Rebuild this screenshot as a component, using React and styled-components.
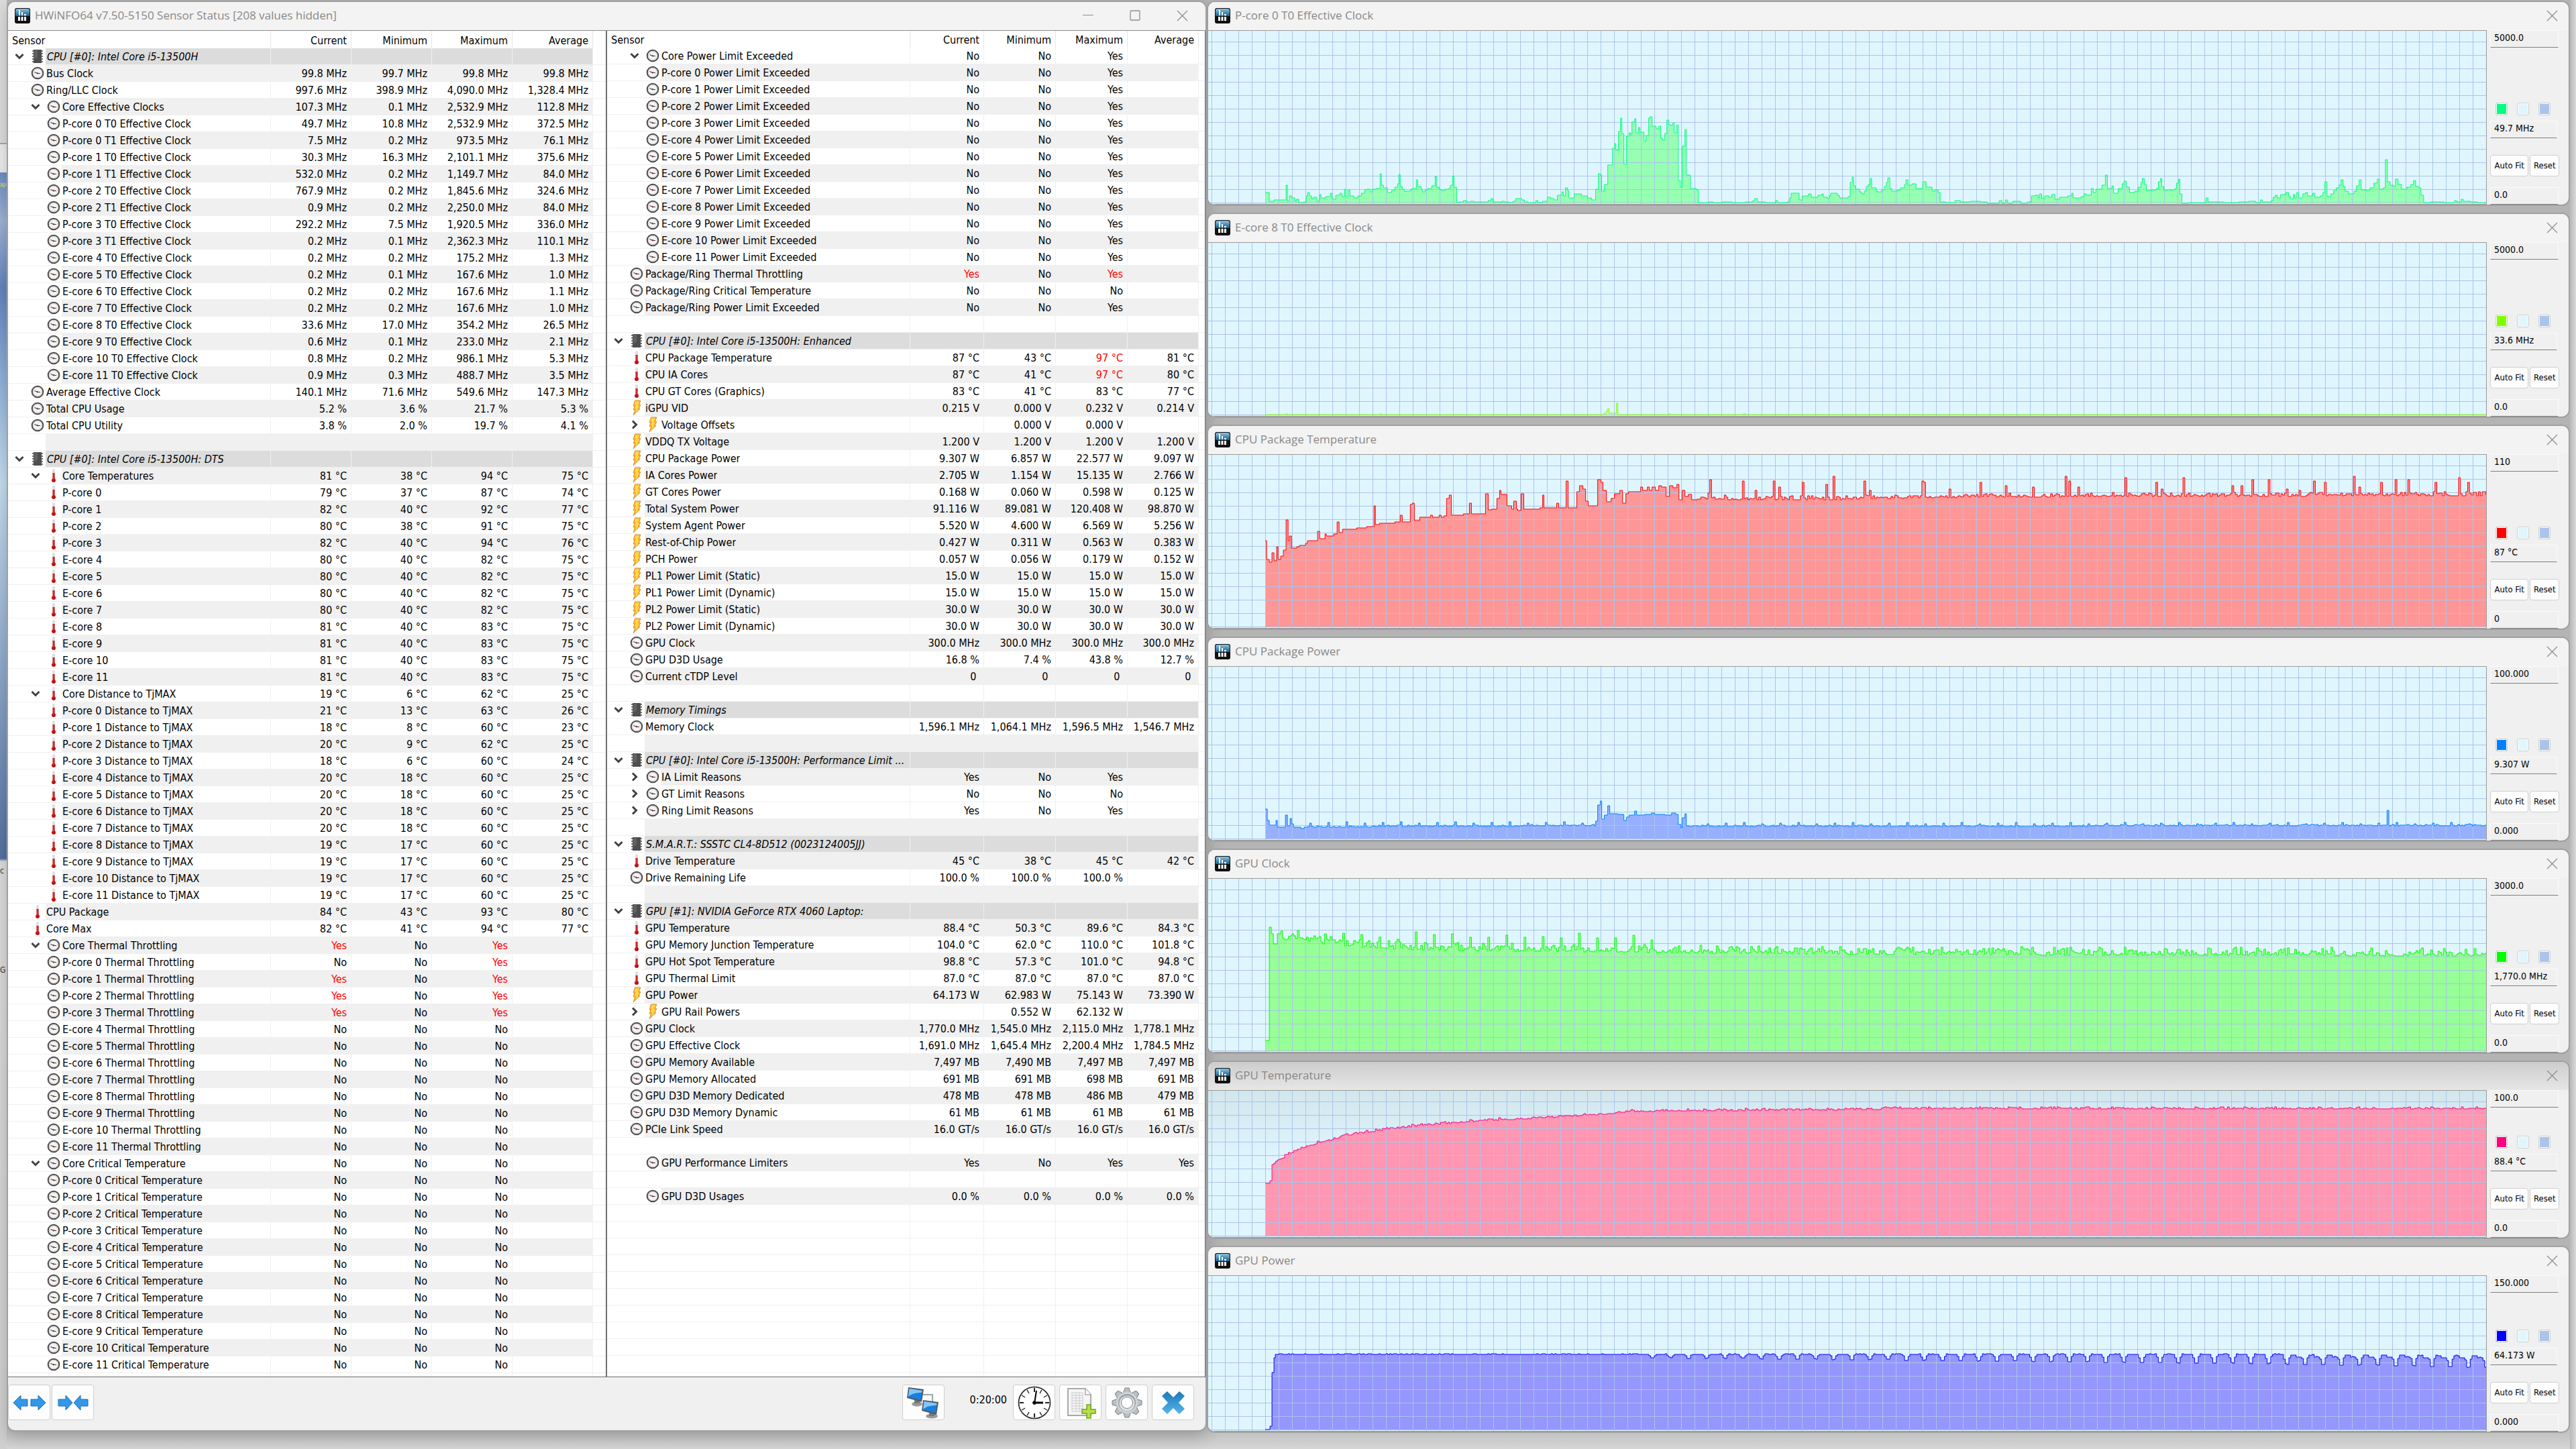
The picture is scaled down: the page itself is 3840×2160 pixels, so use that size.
import styled, { createGlobalStyle } from 'styled-components';

const GlobalStyle = createGlobalStyle`
    body {
        margin: 0;
        background: #c6c6c6;
    }

    * {
        box-sizing: border-box;
    }
`;

const UI_FONT = `'DejaVu Sans Condensed', 'Noto Sans', sans-serif`;
const TITLE_FONT = `'Open Sans', 'Noto Sans', sans-serif`;

const Desktop = styled.div`
    min-height: 100vh;
    display: grid;
    grid-template-columns: 10px 1789fr 2032fr 9px;
    align-items: start;
    background: linear-gradient(#b4b4b4 0 98%, #c4c4c4 99%, #d6d6d6 100%);
    font-family: ${UI_FONT};
    font-size: 16px;
    color: #000;
`;

const Wallpaper = styled.div`
    align-self: stretch;
    display: flex;
    flex-direction: column;
    background: linear-gradient(
        #dcdcdc 0 213px, #a8a8a8 213px 215px, #ececec 215px 257px, #6f8ec4 257px, #9fb4d4 330px,
        #6484bd 430px, #8fb0d8 560px, #c5deee 720px, #8fa9cc 1000px, #54719f 1280px, #dcdcdc 1284px, #cfcfcf 100%
    );
`;

const StrayText = styled.span`
    margin-top: ${({ $top }) => $top}px;
    height: 20px;
    line-height: 20px;
    white-space: nowrap;
    font-size: ${({ $size }) => $size}px;
    color: ${({ $color }) => $color};
`;

const RightEdge = styled.div`
    align-self: stretch;
    background: linear-gradient(to right, #b9b9b9, #d9d9d9);
`;

const Window = styled.section`
    display: flex;
    flex-direction: column;
    overflow: hidden;
    border: 2px solid #a0a0a0;
    border-radius: 12px;
    background: #f0f0f0;
`;

const SensorWindow = styled(Window)`
    margin-top: 1px;
    box-shadow: 0 8px 24px rgb(0 0 0 / 20%);
`;

const TitleBar = styled.header`
    height: 42px;
    padding: 0 ${({ $flush }) => ($flush ? 0 : 10)}px 2px 10px;
    display: flex;
    align-items: center;
    gap: 7px;
    background: ${({ $shaded }) => ($shaded ? 'linear-gradient(#cdcdcd, #e6e6e6)' : '#f3f3f3')};
`;

const Title = styled.h1`
    flex: 1;
    margin: 0;
    font-family: ${TITLE_FONT};
    font-weight: 400;
    font-size: 17px;
    line-height: 24px;
    color: #888;
    white-space: nowrap;
`;

const WindowButtons = styled.div`
    display: flex;
`;

const WindowButton = styled.button`
    width: ${({ $wide }) => ($wide ? 70 : 30)}px;
    height: 32px;
    padding: 0;
    display: flex;
    align-items: center;
    justify-content: center;
    border: 0;
    background: none;
    color: #8f8f8f;
`;

const Panes = styled.div`
    display: grid;
    grid-template-columns: 891fr 894fr;
    border-top: 1px solid #8a8a8a;
    border-bottom: 1px solid #6e6e6e;
    background: #fff;
`;

const Pane = styled.div`
    min-width: 0;
    height: 2006px;
    overflow: hidden;

    & + & {
        border-left: 2px solid #6e6e6e;
        border-right: 1px solid #6e6e6e;
    }
`;

const SensorTable = styled.table`
    width: 100%;
    table-layout: fixed;
    border-collapse: separate;
    border-spacing: 0;
    line-height: 20px;
    white-space: nowrap;
`;

const HeadCell = styled.th`
    height: ${({ $height }) => $height}px;
    padding: 3px 6px 0;
    border-right: 1px solid #e5e5e5;
    font-weight: 400;
    text-align: ${({ $first }) => ($first ? 'left' : 'right')};

    &:last-child {
        border-right: 0;
    }
`;

const ROW_FILL = { group: '#dcdcdc', striped: '#f0f0f0', plain: '#fff' };

const Cell = styled.td`
    height: 25px;
    padding: 2px 6px 0 0;
    border-right: 1px solid #f0f0f0;
    border-bottom: 1px solid #f0f0f0;
    background: ${({ $fill }) => ROW_FILL[$fill]};
    color: ${({ $alert }) => ($alert ? '#f00' : '#000')};
    text-align: right;
`;

const NameCell = styled(Cell)`
    padding: 0;
    text-align: left;
`;

const FillerCell = styled.td`
    border-bottom: 1px solid #f0f0f0;
`;

const Name = styled.div`
    display: flex;
    align-items: center;
    height: 24px;
`;

const Lead = styled.span`
    flex: none;
    height: 24px;
    width: ${({ $deep }) => ($deep ? 80 : 56)}px;
    padding-right: 2px;
    display: flex;
    align-items: center;
    justify-content: flex-end;
    gap: 10px;
    background: #fff;
`;

const Label = styled.span`
    padding: 2px 0 0 ${({ $group }) => ($group ? 2 : 1)}px;
    overflow: hidden;
    text-overflow: ellipsis;
    font-style: ${({ $group }) => ($group ? 'italic' : 'normal')};
`;

const Expander = styled.button`
    width: 14px;
    height: 14px;
    padding: 0;
    border: 0;
    background: none;
    display: flex;
`;

const ToolBar = styled.footer`
    height: 79px;
    padding: 11px 17px 0 0;
    display: flex;
    align-items: flex-start;
    gap: 2px;
`;

const Tools = styled.div`
    margin-left: auto;
    display: flex;
    align-items: center;
    gap: 6px;
`;

const ToolButton = styled.button`
    width: 63px;
    height: 53px;
    padding: 0;
    display: flex;
    align-items: center;
    justify-content: center;
    border: 1px solid #cfcfcf;
    border-radius: 4px;
    background: #fdfdfd;
`;

const Elapsed = styled.time`
    padding: 0 3px 8px 32px;
`;

const ChartStack = styled.main`
    margin-top: 1px;
    display: flex;
    flex-direction: column;
    gap: 10px;
`;

const ChartBody = styled.div`
    display: flex;
    height: ${({ $height }) => $height}px;
`;

const Plot = styled.svg`
    flex: 1;
    min-width: 0;
    height: 100%;
    border: 1px solid #9a9a9a;
    border-left: 0;
    background: ${({ $shaded }) => ($shaded ? 'linear-gradient(#d2e6ec, #e0f6fe 50%)' : '#e0f6fe')};
`;

const Controls = styled.div`
    width: 122px;
    padding: 0 14px 0 5px;
    display: flex;
    flex-direction: column;
`;

const Field = styled.input`
    width: ${({ $short }) => ($short ? 100 : 102)}px;
    height: 26px;
    padding: 0 5px 4px;
    border: 1px solid #fafafa;
    border-bottom-color: #808080;
    background: transparent;
    font-family: ${UI_FONT};
    font-size: 14px;
    color: #000;
`;

const Swatches = styled.div`
    margin-top: auto;
    margin-bottom: 8px;
    padding-left: 8px;
    display: flex;
    gap: 14px;
`;

const Swatch = styled.button`
    width: 18px;
    height: 19px;
    padding: 0;
    border: 1px solid #cfcfcf;
    border-radius: 3px;
    box-shadow: inset 0 0 0 1px #fdfdfd;
    background: ${({ $color }) => $color};
`;

const Actions = styled.div`
    margin: 25px 0 16px;
    display: flex;
    gap: 2px;
`;

const ActionButton = styled.button`
    width: ${({ $wide }) => ($wide ? 58 : 44)}px;
    height: 32px;
    padding: 0 0 2px;
    border: 1px solid #cfcfcf;
    border-radius: 4px;
    background: #fdfdfd;
    font-family: ${UI_FONT};
    font-size: 13px;
    color: #000;
    white-space: nowrap;
`;

/* ---------- icons ---------- */

const AppIcon = () => (
    <svg width="23" height="23" viewBox="0 0 23 23">
        <defs>
            <linearGradient id="appTop" x1="0" y1="0" x2="0" y2="1">
                <stop offset="0" stopColor="#8fc1dc" />
                <stop offset="1" stopColor="#0f5f92" />
            </linearGradient>
        </defs>
        <rect width="23" height="23" rx="3" fill="#111" />
        <path d="M1 4a3 3 0 0 1 3-3h15a3 3 0 0 1 3 3v8H1z" fill="url(#appTop)" />
        <path d="M6 3h2v8H6zM10 6h2v5h-2zM14 9h3v2h-3z" fill="#fff" />
        <path d="M5 13h3v6H5zM9.500 13h3v6h-3zM14 13h3v6h-3z" fill="#fff" />
    </svg>
);

const CloseGlyph = () => (
    <svg width="17" height="17" viewBox="0 0 17 17" fill="none" stroke="currentColor" strokeWidth="1.300">
        <path d="M1 1l15 15M16 1L1 16" />
    </svg>
);

const MinimizeGlyph = () => (
    <svg width="16" height="16" viewBox="0 0 16 16" stroke="currentColor">
        <path d="M0 7.500h16" />
    </svg>
);

const MaximizeGlyph = () => (
    <svg width="16" height="16" viewBox="0 0 16 16" fill="none" stroke="currentColor" strokeWidth="1.300">
        <rect x="1" y="1" width="14" height="14" rx="1" />
    </svg>
);

const ClockIcon = () => (
    <svg width="20" height="20" viewBox="0 0 20 20">
        <circle cx="10" cy="10" r="8.300" fill="#f4f4f4" stroke="#4c4c4c" strokeWidth="2" />
        <circle cx="10" cy="10" r="6.500" fill="none" stroke="#cfcfcf" />
        <path d="M5.500 8.500L10 10.500h4" fill="none" stroke="#4a3a38" strokeWidth="1.200" />
        <circle cx="10" cy="10.300" r="1.200" fill="#8a3a30" />
    </svg>
);

const TempIcon = () => (
    <svg width="20" height="22" viewBox="0 0 20 22">
        <rect x="8" y="1" width="4" height="16" rx="2" fill="#dedede" />
        <rect x="8.500" y="7" width="3" height="10" fill="#c81414" />
        <circle cx="10" cy="18" r="3" fill="#c01010" />
        <path d="M9 8v9" stroke="#f07070" strokeWidth=".8" />
    </svg>
);

const BoltIcon = () => (
    <svg width="20" height="24" viewBox="0 0 20 24">
        <path d="M7.500 1H16l-2.500 6.500H16L13 13.500h2L5 23l2.500-8H5l2-6H5z" fill="#f9b01c" stroke="#dc8f3c" strokeWidth=".9" />
        <path d="M8.500 2.200h5.500L11.500 8.500h2.500L11 14.500H12.500L8 19l1.500-5.500H7l2-6H7.200z" fill="#ffd84d" />
    </svg>
);

const ChipIcon = () => (
    <svg width="20" height="22" viewBox="0 0 20 22">
        <path d="M3.500 2v19M16.500 2v19" stroke="#777" strokeWidth="3" strokeDasharray="2 2" />
        <rect x="4" y="1" width="12" height="20" fill="#4e4e50" />
        <path d="M5 2h5v10l-5 4z" fill="#626264" />
    </svg>
);

const Chevron = ({ open }) => (
    <svg width="14" height="14" viewBox="0 0 14 14" fill="none" stroke="#404040" strokeWidth="3">
        <path d={open ? 'M1.500 4l5.500 5.500L12.500 4' : 'M4 1.500L9.500 7 4 12.500'} />
    </svg>
);

const ICONS = { chip: ChipIcon, clock: ClockIcon, temp: TempIcon, bolt: BoltIcon };

const ExpandIcon = () => (
    <svg width="50" height="30" viewBox="0 0 50 30" fill="#3498e8" stroke="#1f6fb2">
        <path d="M1 15L12 4v6h10v10H12v6zM49 15L38 4v6H27v10h11v6z" />
    </svg>
);

const CollapseIcon = () => (
    <svg width="50" height="30" viewBox="0 0 50 30" fill="#3498e8" stroke="#1f6fb2">
        <path d="M24 15L14 4v6H3v10h11v6zM26 15L36 4v6h11v10H36v6z" />
    </svg>
);

const NetworkIcon = () => (
    <svg width="50" height="48" viewBox="0 0 50 48">
        <path d="M25 12h14v12" fill="none" stroke="#7b8a8a" strokeWidth="1.500" />
        <ellipse cx="16" cy="26" rx="8" ry="3.500" fill="#9a9a9a" />
        <path d="M12 19h8v6h-8z" fill="#777" />
        <path d="M3 1l23 3-3 19-22-6z" fill="#555d66" />
        <path d="M4.500 3l19 3-2 14-19-5z" fill="#1680e0" />
        <path d="M4.500 3l19 3-.6 3C14 9 7 11 3 15z" fill="#86c6f7" />
        <ellipse cx="38" cy="44" rx="9" ry="3.500" fill="#9a9a9a" />
        <path d="M34 38h8v6h-8z" fill="#777" />
        <path d="M25 20l23 3-3 19-22-6z" fill="#555d66" />
        <path d="M26.500 22l19 3-2 14-19-5z" fill="#1680e0" />
        <path d="M26.500 22l19 3-.6 3c-8.900 0-15.900 2-19.900 6z" fill="#86c6f7" />
    </svg>
);

const BigClockIcon = () => (
    <svg width="50" height="50" viewBox="0 0 50 50" fill="none" stroke="#222">
        <circle cx="25" cy="25" r="23.500" fill="#fff" strokeWidth="1.600" />
        {[...Array(12)].map((_, i) => (
            <path key={i} d="M25 3v6" strokeWidth={i % 3 ? 1.3 : 2} transform={`rotate(${i * 30} 25 25)`} />
        ))}
        <path d="M25 26l3-19" stroke="#000" strokeWidth="2" />
        <path d="M25 25h13" stroke="#000" strokeWidth="3" />
        <circle cx="25" cy="25" r="2.500" fill="#000" />
    </svg>
);

const ReportIcon = () => (
    <svg width="46" height="48" viewBox="0 0 46 48">
        <path d="M4 3h26l8 9v31H4z" fill="#f5f5f5" stroke="#a9a9a9" strokeWidth="2" />
        <path d="M30 3v9h8" fill="#fff" stroke="#a9a9a9" strokeWidth="1.500" />
        <path d="M10 9h16v28H10zM10 13h16M10 17h16M10 21h16M10 25h16M10 29h16M10 33h16M16 9v28M21 9v28" fill="none" stroke="#cccccc" />
        <path d="M32 27h6v7h7v6h-7v7h-6v-7h-7v-6h7z" fill="#b5e04a" stroke="#6fa51e" strokeWidth="1.500" />
    </svg>
);

const GearIcon = () => (
    <svg width="48" height="48" viewBox="0 0 48 48">
        <g fill="#b9bfc2" stroke="#7d8488">
            {[...Array(8)].map((_, i) => (
                <path key={i} d="M18 11l3-9h6l3 9z" transform={`rotate(${i * 45} 24 24)`} />
            ))}
        </g>
        <circle cx="24" cy="24" r="16" fill="#ced3d5" />
        <circle cx="24" cy="24" r="13" fill="#979da1" />
        <circle cx="24" cy="25" r="11.500" fill="#dde1e2" />
        <circle cx="24" cy="24" r="8.500" fill="#fff" stroke="#7d8488" />
    </svg>
);

const QuitIcon = () => (
    <svg width="38" height="38" viewBox="0 0 38 38">
        <defs>
            <linearGradient id="quit" x1="0" y1="0" x2="0" y2="1">
                <stop offset="0" stopColor="#1c79b8" />
                <stop offset="1" stopColor="#57b5ea" />
            </linearGradient>
        </defs>
        <path d="M10 2l9 9 9-9 8 7-9 10 9 9-8 8-9-9-9 9-8-8 9-9-9-10z" fill="url(#quit)" />
    </svg>
);

/* ---------- sensor lists ---------- */

// icon | level | label | current | minimum | maximum | average
// level: 0 section, 1 value, 2 nested value, + / - an expanded / collapsed branch
const parseRows = (text) =>
    text.trim().split('\n').map((line) => {
        const [icon, level, label, ...values] = line.split('|').map((part) => part.trim());
        return { icon, level, label, values };
    });

const same = (icon, names, suffix, values) =>
    names.map((name) => `${icon}|2|${name} ${suffix}|${values}`).join('\n');

const cores = (from, to) => {
    const list = [];
    for (let i = from; i <= to; i++) list.push(`${i < 4 ? 'P' : 'E'}-core ${i}`);
    return list;
};

const LEFT_ROWS = parseRows(`
chip|0|CPU [#0]: Intel Core i5-13500H
clock|1|Bus Clock|99.8 MHz|99.7 MHz|99.8 MHz|99.8 MHz
clock|1|Ring/LLC Clock|997.6 MHz|398.9 MHz|4,090.0 MHz|1,328.4 MHz
clock|+|Core Effective Clocks|107.3 MHz|0.1 MHz|2,532.9 MHz|112.8 MHz
clock|2|P-core 0 T0 Effective Clock|49.7 MHz|10.8 MHz|2,532.9 MHz|372.5 MHz
clock|2|P-core 0 T1 Effective Clock|7.5 MHz|0.2 MHz|973.5 MHz|76.1 MHz
clock|2|P-core 1 T0 Effective Clock|30.3 MHz|16.3 MHz|2,101.1 MHz|375.6 MHz
clock|2|P-core 1 T1 Effective Clock|532.0 MHz|0.2 MHz|1,149.7 MHz|84.0 MHz
clock|2|P-core 2 T0 Effective Clock|767.9 MHz|0.2 MHz|1,845.6 MHz|324.6 MHz
clock|2|P-core 2 T1 Effective Clock|0.9 MHz|0.2 MHz|2,250.0 MHz|84.0 MHz
clock|2|P-core 3 T0 Effective Clock|292.2 MHz|7.5 MHz|1,920.5 MHz|336.0 MHz
clock|2|P-core 3 T1 Effective Clock|0.2 MHz|0.1 MHz|2,362.3 MHz|110.1 MHz
clock|2|E-core 4 T0 Effective Clock|0.2 MHz|0.2 MHz|175.2 MHz|1.3 MHz
clock|2|E-core 5 T0 Effective Clock|0.2 MHz|0.1 MHz|167.6 MHz|1.0 MHz
clock|2|E-core 6 T0 Effective Clock|0.2 MHz|0.2 MHz|167.6 MHz|1.1 MHz
clock|2|E-core 7 T0 Effective Clock|0.2 MHz|0.2 MHz|167.6 MHz|1.0 MHz
clock|2|E-core 8 T0 Effective Clock|33.6 MHz|17.0 MHz|354.2 MHz|26.5 MHz
clock|2|E-core 9 T0 Effective Clock|0.6 MHz|0.1 MHz|233.0 MHz|2.1 MHz
clock|2|E-core 10 T0 Effective Clock|0.8 MHz|0.2 MHz|986.1 MHz|5.3 MHz
clock|2|E-core 11 T0 Effective Clock|0.9 MHz|0.3 MHz|488.7 MHz|3.5 MHz
clock|1|Average Effective Clock|140.1 MHz|71.6 MHz|549.6 MHz|147.3 MHz
clock|1|Total CPU Usage|5.2 %|3.6 %|21.7 %|5.3 %
clock|1|Total CPU Utility|3.8 %|2.0 %|19.7 %|4.1 %
|blank
chip|0|CPU [#0]: Intel Core i5-13500H: DTS
temp|+|Core Temperatures|81 °C|38 °C|94 °C|75 °C
temp|2|P-core 0|79 °C|37 °C|87 °C|74 °C
temp|2|P-core 1|82 °C|40 °C|92 °C|77 °C
temp|2|P-core 2|80 °C|38 °C|91 °C|75 °C
temp|2|P-core 3|82 °C|40 °C|94 °C|76 °C
${same('temp', cores(4, 7), '', '80 °C|40 °C|82 °C|75 °C')}
${same('temp', cores(8, 11), '', '81 °C|40 °C|83 °C|75 °C')}
temp|+|Core Distance to TjMAX|19 °C|6 °C|62 °C|25 °C
temp|2|P-core 0 Distance to TjMAX|21 °C|13 °C|63 °C|26 °C
temp|2|P-core 1 Distance to TjMAX|18 °C|8 °C|60 °C|23 °C
temp|2|P-core 2 Distance to TjMAX|20 °C|9 °C|62 °C|25 °C
temp|2|P-core 3 Distance to TjMAX|18 °C|6 °C|60 °C|24 °C
${same('temp', cores(4, 7), 'Distance to TjMAX', '20 °C|18 °C|60 °C|25 °C')}
${same('temp', cores(8, 11), 'Distance to TjMAX', '19 °C|17 °C|60 °C|25 °C')}
temp|1|CPU Package|84 °C|43 °C|93 °C|80 °C
temp|1|Core Max|82 °C|41 °C|94 °C|77 °C
clock|+|Core Thermal Throttling|!Yes|No|!Yes|
clock|2|P-core 0 Thermal Throttling|No|No|!Yes|
${same('clock', cores(1, 3), 'Thermal Throttling', '!Yes|No|!Yes|')}
${same('clock', cores(4, 11), 'Thermal Throttling', 'No|No|No|')}
clock|+|Core Critical Temperature|No|No|No|
${same('clock', cores(0, 11), 'Critical Temperature', 'No|No|No|')}
`);

const RIGHT_ROWS = parseRows(`
clock|+|Core Power Limit Exceeded|No|No|Yes|
${same('clock', cores(0, 11), 'Power Limit Exceeded', 'No|No|Yes|')}
clock|1|Package/Ring Thermal Throttling|!Yes|No|!Yes|
clock|1|Package/Ring Critical Temperature|No|No|No|
clock|1|Package/Ring Power Limit Exceeded|No|No|Yes|
|blank
chip|0|CPU [#0]: Intel Core i5-13500H: Enhanced
temp|1|CPU Package Temperature|87 °C|43 °C|!97 °C|81 °C
temp|1|CPU IA Cores|87 °C|41 °C|!97 °C|80 °C
temp|1|CPU GT Cores (Graphics)|83 °C|41 °C|83 °C|77 °C
bolt|1|iGPU VID|0.215 V|0.000 V|0.232 V|0.214 V
bolt|-|Voltage Offsets||0.000 V|0.000 V|
bolt|1|VDDQ TX Voltage|1.200 V|1.200 V|1.200 V|1.200 V
bolt|1|CPU Package Power|9.307 W|6.857 W|22.577 W|9.097 W
bolt|1|IA Cores Power|2.705 W|1.154 W|15.135 W|2.766 W
bolt|1|GT Cores Power|0.168 W|0.060 W|0.598 W|0.125 W
bolt|1|Total System Power|91.116 W|89.081 W|120.408 W|98.870 W
bolt|1|System Agent Power|5.520 W|4.600 W|6.569 W|5.256 W
bolt|1|Rest-of-Chip Power|0.427 W|0.311 W|0.563 W|0.383 W
bolt|1|PCH Power|0.057 W|0.056 W|0.179 W|0.152 W
bolt|1|PL1 Power Limit (Static)|15.0 W|15.0 W|15.0 W|15.0 W
bolt|1|PL1 Power Limit (Dynamic)|15.0 W|15.0 W|15.0 W|15.0 W
bolt|1|PL2 Power Limit (Static)|30.0 W|30.0 W|30.0 W|30.0 W
bolt|1|PL2 Power Limit (Dynamic)|30.0 W|30.0 W|30.0 W|30.0 W
clock|1|GPU Clock|300.0 MHz|300.0 MHz|300.0 MHz|300.0 MHz
clock|1|GPU D3D Usage|16.8 %|7.4 %|43.8 %|12.7 %
clock|1|Current cTDP Level|0_|0_|0_|0_
|blank
chip|0|Memory Timings
clock|1|Memory Clock|1,596.1 MHz|1,064.1 MHz|1,596.5 MHz|1,546.7 MHz
|blank
chip|0|CPU [#0]: Intel Core i5-13500H: Performance Limit ...
clock|-|IA Limit Reasons|Yes|No|Yes|
clock|-|GT Limit Reasons|No|No|No|
clock|-|Ring Limit Reasons|Yes|No|Yes|
|blank
chip|0|S.M.A.R.T.: SSSTC CL4-8D512 (0023124005JJ)
temp|1|Drive Temperature|45 °C|38 °C|45 °C|42 °C
clock|1|Drive Remaining Life|100.0 %|100.0 %|100.0 %|
|blank
chip|0|GPU [#1]: NVIDIA GeForce RTX 4060 Laptop:
temp|1|GPU Temperature|88.4 °C|50.3 °C|89.6 °C|84.3 °C
temp|1|GPU Memory Junction Temperature|104.0 °C|62.0 °C|110.0 °C|101.8 °C
temp|1|GPU Hot Spot Temperature|98.8 °C|57.3 °C|101.0 °C|94.8 °C
temp|1|GPU Thermal Limit|87.0 °C|87.0 °C|87.0 °C|87.0 °C
bolt|1|GPU Power|64.173 W|62.983 W|75.143 W|73.390 W
bolt|-|GPU Rail Powers||0.552 W|62.132 W|
clock|1|GPU Clock|1,770.0 MHz|1,545.0 MHz|2,115.0 MHz|1,778.1 MHz
clock|1|GPU Effective Clock|1,691.0 MHz|1,645.4 MHz|2,200.4 MHz|1,784.5 MHz
clock|1|GPU Memory Available|7,497 MB|7,490 MB|7,497 MB|7,497 MB
clock|1|GPU Memory Allocated|691 MB|691 MB|698 MB|691 MB
clock|1|GPU D3D Memory Dedicated|478 MB|478 MB|486 MB|479 MB
clock|1|GPU D3D Memory Dynamic|61 MB|61 MB|61 MB|61 MB
clock|1|PCIe Link Speed|16.0 GT/s|16.0 GT/s|16.0 GT/s|16.0 GT/s
|blank
clock|2|GPU Performance Limiters|Yes|No|Yes|Yes
|blank
clock|2|GPU D3D Usages|0.0 %|0.0 %|0.0 %|0.0 %
`);

const COLUMNS = ['Current', 'Minimum', 'Maximum', 'Average'];

const SensorRow = ({ row, striped }) => {
    const { icon, level, label, values } = row;
    const group = level === '0';
    const branch = level === '+' || level === '-';
    const fill = group ? 'group' : striped ? 'striped' : 'plain';
    const Icon = ICONS[icon];

    return (
        <tr>
            <NameCell $fill={fill}>
                <Name>
                    {level !== 'empty' && (
                        <Lead $deep={branch || level === '2'}>
                            {(group || branch) && (
                                <Expander aria-label={`Toggle ${label}`}>
                                    <Chevron open={level !== '-'} />
                                </Expander>
                            )}
                            {Icon && <Icon />}
                        </Lead>
                    )}
                    <Label $group={group}>{label}</Label>
                </Name>
            </NameCell>
            {COLUMNS.map((name, i) => {
                const value = (values && values[i]) || '';
                return (
                    <Cell key={name} $fill={fill} $alert={value[0] === '!'}>
                        {value.replace('!', '').replace('_', '\u00a0')}
                    </Cell>
                );
            })}
            <FillerCell />
        </tr>
    );
};

const SensorPane = ({ rows, widths, headHeight, shiftAt = Infinity }) => {
    const total = 81;
    const all = [...rows, ...Array(total - rows.length).fill({ level: 'empty' })];

    return (
        <Pane>
            <SensorTable>
                <colgroup>
                    <col />
                    {widths.map((width, i) => <col key={i} width={width} />)}
                </colgroup>
                <thead>
                    <tr>
                        <HeadCell $first $height={headHeight}>Sensor</HeadCell>
                        {COLUMNS.map((name) => <HeadCell key={name} $height={headHeight}>{name}</HeadCell>)}
                        <HeadCell />
                    </tr>
                </thead>
                <tbody>
                    {all.map((row, i) => (
                        <SensorRow
                            key={i}
                            row={row}
                            // collapsed children count towards the striping
                            striped={row.level !== 'empty' && i % 2 === (i >= shiftAt ? 0 : 1)}
                        />
                    ))}
                </tbody>
            </SensorTable>
        </Pane>
    );
};

/* ---------- charts ---------- */

const SPAN = 1903;
const START = 85;
const STEP = 2.7;

const noiseAt = (i) => {
    const n = Math.sin(i * 12.9898 + 4.1) * 43758.5453;
    return n - Math.floor(n);
};

// "x:h x:h ..." -> [[x, h], ...]
const parsePoints = (text) => text.trim().split(/\s+/).map((pair) => pair.split(':').map(Number));

const levelAt = (points, x) => {
    let k = 0;
    while (k < points.length - 2 && points[k + 1][0] <= x) k++;
    const [x0, h0] = points[k];
    const [x1, h1] = points[k + 1];
    return h0 + ((h1 - h0) * Math.min(1, (x - x0) / (x1 - x0)));
};

// a slow curve with noise, spikes on top of it
const sampled = (from, points, noise, spikes = [], shape = () => 0) => {
    const out = [];
    for (let i = 0, x = from; x < SPAN; i++, x += STEP) {
        const spike = spikes.find(([at]) => x >= at && x < at + STEP);
        const wobble = Math.round((noiseAt(i) ** 2) * noise);
        out.push([x, spike ? spike[1] : Math.round(levelAt(points, x)) + wobble + shape(x, i)]);
    }
    return out;
};

const every = (from, to, gap, height) => {
    const list = [];
    for (let x = from, i = 0; x < to; x += gap, i++) list.push([x, height(i)]);
    return list;
};

const P_CORE = parsePoints(`
85:16 91:3 98:5 110:5 116:27 118:3 121:11 124:8 129:3 131:6 135:1 142:2 146:11 148:16 151:11 154:7 157:9 162:3 166:13
168:8 175:10 182:15 184:8 186:6 190:12 196:15 199:10 203:21 205:10 208:20 211:11 217:8 223:11 228:15 233:20 236:21
241:17 244:21 250:22 256:44 258:27 261:23 267:16 273:19 278:24 282:29 284:43 286:25 289:21 292:18 300:19 303:22 310:35
312:25 317:21 319:17 323:20 327:22 333:26 338:40 340:24 344:21 347:19 353:21 359:23 361:27 364:41 366:24 370:1 374:2
380:4 385:2 391:3 396:2 417:4 421:7 424:2 435:1 437:3 441:2 448:1 454:3 458:7 467:5 471:2 476:1 488:4 491:1 498:3 505:9
510:7 515:5 520:12 527:17 529:11 532:23 535:19 537:8 545:14 556:11 565:8 571:5 577:21 581:44 584:42 586:18 590:28 595:57
602:82 605:89 607:79 611:107 614:127 616:104 619:58 623:100 627:105 629:102 631:121 635:126 637:105 641:113 643:106
649:93 652:101 656:127 658:129 661:115 667:111 671:115 674:97 677:94 680:104 683:124 686:117 689:116 692:120 694:105
698:117 700:34 703:24 706:85 710:110 712:42 718:22 727:20 730:1 745:2 752:1 766:2 780:1 800:2 811:4 814:7 818:2 830:1
845:4 848:1 862:2 866:8 868:15 880:5 885:11 894:14 898:9 908:12 914:14 916:9 922:7 925:11 927:15 937:12 940:8 953:10
956:31 959:39 961:26 964:21 970:17 973:14 977:18 980:25 983:28 986:37 988:23 995:18 997:17 1003:20 1007:25 1010:31
1012:38 1015:22 1018:18 1026:20 1031:23 1037:28 1039:35 1042:27 1048:29 1054:22 1064:32 1069:24 1078:18 1082:20 1087:16
1090:2 1098:1 1112:4 1120:2 1135:3 1150:2 1160:0 1178:4 1182:0 1187:5 1190:0 1198:3 1210:0 1220:2 1226:11 1231:12
1236:8 1238:14 1241:7 1246:11 1252:9 1256:13 1261:6 1268:9 1280:11 1286:15 1288:8 1300:10 1304:14 1308:12 1315:22
1318:16 1322:21 1331:27 1336:42 1339:22 1346:26 1348:15 1355:22 1361:29 1364:33 1367:24 1372:16 1380:18 1385:24 1389:31
1391:37 1394:28 1397:19 1405:20 1412:22 1415:32 1418:37 1420:25 1423:19 1428:20 1440:22 1442:30 1445:36 1447:14 1450:0
1460:1 1486:8 1489:2 1512:1 1535:2 1549:3 1560:1 1567:5 1570:2 1583:4 1586:9 1589:12 1592:8 1597:13 1605:16 1609:10
1612:7 1616:13 1618:8 1621:16 1624:8 1630:14 1634:16 1637:11 1645:15 1648:9 1656:11 1660:16 1663:32 1666:10 1672:14
1676:19 1680:23 1684:27 1687:35 1690:25 1693:18 1698:14 1706:18 1710:26 1714:35 1717:20 1724:19 1730:23 1736:30 1741:36
1744:21 1750:23 1753:65 1756:32 1760:27 1765:25 1768:36 1772:28 1777:21 1785:24 1791:28 1795:34 1798:25 1803:23 1806:12
1810:1 1820:2 1840:1 1856:4 1859:2 1866:6 1869:3 1880:2 1890:1
`);

const E_CORE = parsePoints('85:1 116:2 118:1 256:2 258:1 589:3 593:6 595:10 597:3 608:18 610:1 686:2 688:1 797:2 800:1');

const CPU_TEMP = [
    ...parsePoints(`
    85:129 87:101 91:97 95:111 98:99 102:120 104:101 108:106 112:115 116:160 119:129 121:136 124:118 132:120 136:122
    145:125 148:129 163:143 166:132 174:139 176:136 187:139 192:157 195:141 200:146 208:146 221:148 236:150 247:181
    249:153 255:155 278:157 286:167 289:157 301:183 304:185 307:159 315:164 331:167 334:164 344:167 347:164 351:166
    355:192 359:197 362:167 380:169 389:185 392:169 413:199 417:175 422:176 430:192 434:204 436:198 445:181 452:176
    455:188 459:176 461:174 466:199 470:176 494:178 498:197 500:178 519:185 522:178 533:218 536:178 549:202 553:211
    558:206 562:188 566:181 580:220 585:216 588:204 593:187 600:192 605:199 613:204 617:185 622:199 626:202 644:209
    647:204 654:209 657:204 661:209 666:204 671:211 675:209 682:195 687:211 692:208 698:213 701:190 706:204 710:195
    715:198 720:190`),
    ...sampled(728, [[728, 190], [942, 190], [1000, 192], [1165, 194], [1400, 195], [SPAN, 196]], 6, [
        [742, 200], [746, 220], [766, 197], [795, 218], [812, 204], [839, 218], [847, 209], [884, 216], [919, 213],
        [928, 225], [974, 218], [983, 204], [1061, 218], [1064, 216], [1103, 206], [1148, 216], [1187, 211],
        [1225, 209], [1276, 225], [1281, 218], [1293, 209], [1365, 223], [1410, 216], [1417, 206], [1451, 223],
        [1523, 211], [1536, 211], [1553, 220], [1578, 220], [1605, 206], [1622, 204], [1646, 218], [1660, 216],
        [1703, 225], [1712, 209], [1745, 216], [1766, 220], [1786, 220], [1825, 216], [1862, 223], [1873, 216],
        [1898, 202],
    ]),
];

const CPU_POWER = [
    ...parsePoints('85:45 88:28 91:21 101:28 103:18 115:36 118:20 122:31 124:23 127:18 138:16'),
    ...sampled(143, [[143, 18], [577, 20]], 2, every(149, 577, 27, (i) => 24 + (i % 3))).filter(([x]) => x < 577),
    ...parsePoints(`
    577:27 580:51 584:57 586:30 590:36 595:50 598:38 610:37 619:28 623:33 627:36 635:42 638:36 650:37 660:39 665:37
    680:36 690:39 696:37 700:22 704:17 706:32 710:38 712:20`),
    ...sampled(716, [[716, 19], [SPAN, 20]], 2, [[1754, 43], ...every(743, SPAN, 27, (i) => 23 + (i % 3))]),
];

const GPU_CLOCK = [
    ...parsePoints('85:16 91:185 94:175 97:160 103:175 108:179 111:168'),
    ...sampled(114, [[114, 164], [200, 157], [300, 151], [700, 147], [1000, 144], [SPAN, 142]], 12,
        every(119, 660, 27, (i) => 166 + Math.round(noiseAt(i) * 12)),
        (x) => (x > 114 && x < 200 ? Math.round(noiseAt(x) * 8) : 0)),
];

const GPU_TEMP = [
    ...parsePoints('85:79 92:83'),
    ...sampled(95, parsePoints(`
    95:107 103:112 112:118 120:123 132:129 145:134 164:139 184:144 204:150 230:154 256:158 289:162 315:165 367:169
    419:173 472:175 524:178 576:181 609:184 635:186 694:187 903:188 1034:190 1165:190 1903:190`), 3),
];

// the dips get deeper with time
const powerDip = (x) => {
    if (x < 655) return 0;
    const depth = 5 + ((x - 655) / 1250) * 12;
    const phase = (x - 655) % 27;
    if (phase < 3) return -Math.round(depth * 0.4);
    if (phase < 8) return -Math.round(depth);
    if (phase < 11) return -Math.round(depth * 0.3);
    return x > 1600 && phase > 20 ? -3 : 0;
};

const GPU_POWER = [
    ...parsePoints('85:1 92:6 95:86 98:108'),
    ...sampled(100, [[100, 113], [1500, 113], [SPAN, 111]], 1, [], powerDip),
];

const CHARTS = [
    { title: 'P-core 0 T0 Effective Clock', max: '5000.0', min: '0.0', value: '49.7 MHz', color: '#00ff80', fill: '#96ffb2', data: P_CORE, height: 260 },
    { title: 'E-core 8 T0 Effective Clock', max: '5000.0', min: '0.0', value: '33.6 MHz', color: '#80ff00', fill: '#c8ff96', data: E_CORE, height: 260 },
    { title: 'CPU Package Temperature', max: '110', min: '0', value: '87 °C', color: '#ff0000', fill: '#ff9696', data: CPU_TEMP, height: 260 },
    { title: 'CPU Package Power', max: '100.000', min: '0.000', value: '9.307 W', color: '#0080ff', fill: '#96b0ff', data: CPU_POWER, height: 260 },
    { title: 'GPU Clock', max: '3000.0', min: '0.0', value: '1,770.0 MHz', color: '#00ff00', fill: '#96ff96', data: GPU_CLOCK, height: 260 },
    { title: 'GPU Temperature', max: '100.0', min: '0.0', value: '88.4 °C', color: '#ff0080', fill: '#ff96b2', data: GPU_TEMP, height: 220, shaded: true },
    { title: 'GPU Power', max: '150.000', min: '0.000', value: '64.173 W', color: '#0000ff', fill: '#9696ff', data: GPU_POWER, height: 233 },
];

const stepPath = (data, floor) => {
    let d = `M${data[0][0]} ${floor - data[0][1]}`;
    data.slice(1).forEach(([x, h]) => {
        d += `H${x.toFixed(1)}V${floor - h}`;
    });
    return `${d}H${SPAN}`;
};

const Trace = ({ id, data, color, fill, height, shaded }) => {
    const inner = height - 2;
    const floor = inner - 1;
    const line = stepPath(data, floor);

    return (
        <Plot $shaded={shaded}>
            <defs>
                <pattern id={id} width="20" height="20" patternUnits="userSpaceOnUse" patternTransform={`translate(5 ${(inner % 20) - 2})`}>
                    <path d="M0 .5h20M.5 0v20" stroke="#aac4ea" />
                </pattern>
            </defs>
            <svg width="100%" height="100%" viewBox={`0 0 ${SPAN} ${inner}`} preserveAspectRatio="none">
                <path d={`${line}V${floor}H${START}z`} fill={fill} />
            </svg>
            <rect width="100%" height="100%" fill={`url(#${id})`} />
            <svg width="100%" height="100%" viewBox={`0 0 ${SPAN} ${inner}`} preserveAspectRatio="none">
                <path d={line} fill="none" stroke={color} vectorEffect="non-scaling-stroke" />
            </svg>
        </Plot>
    );
};

const ChartWindow = ({ chart, id }) => (
    <Window>
        <TitleBar $shaded={chart.shaded}>
            <AppIcon />
            <Title as="h2">{chart.title}</Title>
            <WindowButton aria-label={`Close ${chart.title}`}><CloseGlyph /></WindowButton>
        </TitleBar>
        <ChartBody $height={chart.height}>
            <Trace id={id} {...chart} />
            <Controls>
                <Field aria-label="Scale maximum" defaultValue={chart.max} />
                <Swatches>
                    <Swatch aria-label="Line colour" $color={chart.color} />
                    <Swatch aria-label="Background colour" $color="#e0f6fe" />
                    <Swatch aria-label="Grid colour" $color="#aac4ea" />
                </Swatches>
                <Field aria-label="Current value" $short readOnly value={chart.value} />
                <Actions>
                    <ActionButton $wide>Auto Fit</ActionButton>
                    <ActionButton>Reset</ActionButton>
                </Actions>
                <Field aria-label="Scale minimum" defaultValue={chart.min} />
            </Controls>
        </ChartBody>
    </Window>
);

const App = () => (
    <>
        <GlobalStyle />
        <Desktop>
            <Wallpaper>
                <StrayText $top={266} $size={8} $color="#f2f200">ap</StrayText>
                <StrayText $top={1002} $size={12} $color="#333">c</StrayText>
                <StrayText $top={128} $size={12} $color="#333">G</StrayText>
            </Wallpaper>
            <SensorWindow>
                <TitleBar $flush>
                    <AppIcon />
                    <Title>HWiNFO64 v7.50-5150 Sensor Status [208 values hidden]</Title>
                    <WindowButtons>
                        <WindowButton $wide aria-label="Minimize"><MinimizeGlyph /></WindowButton>
                        <WindowButton $wide aria-label="Maximize"><MaximizeGlyph /></WindowButton>
                        <WindowButton $wide aria-label="Close"><CloseGlyph /></WindowButton>
                    </WindowButtons>
                </TitleBar>
                <Panes>
                    <SensorPane rows={LEFT_ROWS} widths={[120, 120, 120, 120, 19]} headHeight={26} />
                    <SensorPane rows={RIGHT_ROWS} widths={[110, 107, 107, 106, 9]} headHeight={25} shiftAt={45} />
                </Panes>
                <ToolBar>
                    <ToolButton aria-label="Expand columns"><ExpandIcon /></ToolButton>
                    <ToolButton aria-label="Shrink columns"><CollapseIcon /></ToolButton>
                    <Tools>
                        <ToolButton aria-label="Remote sensors"><NetworkIcon /></ToolButton>
                        <Elapsed>0:20:00</Elapsed>
                        <ToolButton aria-label="Reset timer"><BigClockIcon /></ToolButton>
                        <ToolButton aria-label="Start logging"><ReportIcon /></ToolButton>
                        <ToolButton aria-label="Settings"><GearIcon /></ToolButton>
                        <ToolButton aria-label="Close sensors"><QuitIcon /></ToolButton>
                    </Tools>
                </ToolBar>
            </SensorWindow>
            <ChartStack>
                {CHARTS.map((chart, i) => <ChartWindow key={chart.title} chart={chart} id={`grid${i}`} />)}
            </ChartStack>
            <RightEdge />
        </Desktop>
    </>
);

export default App;
